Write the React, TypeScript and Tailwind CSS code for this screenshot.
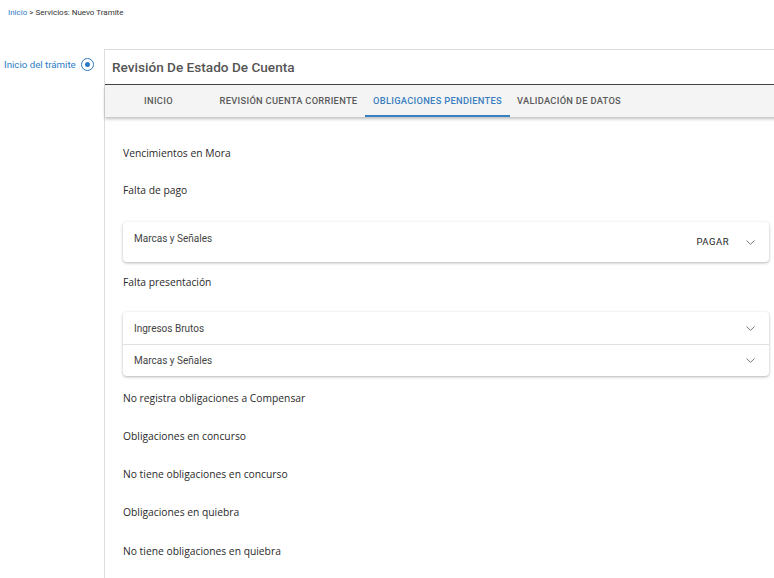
import React from 'react'

const tabs = ['INICIO', 'REVISIÓN CUENTA CORRIENTE', 'OBLIGACIONES PENDIENTES', 'VALIDACIÓN DE DATOS']

function Chevron() {
    return (
        <svg width="9" height="5" viewBox="0 0 9 5" fill="none" className="text-[#777]">
            <path d="M0.8 0.8l3.7 3.5 3.7-3.5" stroke="currentColor" strokeWidth="1" strokeLinecap="round" strokeLinejoin="round" />
        </svg>
    )
}

function Row({ label, divider }: { label: string; divider?: boolean }) {
    return (
        <div className={`flex items-center h-[32px] pl-[11px] pr-[14px] ${divider ? 'border-t border-[#e0e0e0]' : ''}`}>
            <span className="flex-1 text-[10px] text-[#444] font-['Roboto',sans-serif]">{label}</span>
            <Chevron />
        </div>
    )
}

export default function App() {
    const text = "text-[10.3px] leading-[16px] text-[#2a2a2a] font-['Open_Sans',sans-serif]"
    return (
        <div className="w-[774px] h-[578px] overflow-hidden bg-white relative">
            <div className="pl-[8px] pt-[7px] h-[20px] text-[8px] text-[#333] font-['Roboto',sans-serif]">
                <span className="text-[#2c7cc4]">Inicio</span> &gt; Servicios: Nuevo Tramite
            </div>
            <div className="flex mt-[29px]">
                <div className="w-[104px] shrink-0 flex items-start pt-[9px] pl-[4px]">
                    <span className="whitespace-nowrap text-[9.7px] text-[#2c7cc4] font-['Roboto',sans-serif]">Inicio del trámite</span>
                    <span className="ml-[5px] w-[13px] h-[13px] rounded-full border-[1.5px] border-[#2c7cc4] flex items-center justify-center">
                        <span className="w-[5px] h-[5px] rounded-full bg-[#2c7cc4]" />
                    </span>
                </div>
                <div className="w-[683px] shrink-0 border-l border-t border-[#ddd] h-[540px]">
                    <div className="h-[35px] flex items-center pl-[7px] border-b-[1.5px] border-[#444]">
                        <span className="text-[13.6px] font-medium text-[#555] font-['Roboto',sans-serif]">Revisión De Estado De Cuenta</span>
                    </div>
                    <div className="flex h-[32px] bg-[#f4f4f4] shadow-[0_2px_3px_rgba(0,0,0,0.25)] font-['Roboto',sans-serif]">
                        {tabs.map((t, i) => (
                            <div
                                key={t}
                                className={`flex items-center justify-center text-[9.3px] font-medium tracking-[0.3px] ${i === 0 ? 'w-[107px]' : 'px-[7px]'} ${i === 1 ? 'w-[153px]' : ''} ${i === 2 ? 'text-[#3a7fc0] border-b-2 border-[#3a7fc0] w-[145px] pt-[2px]' : 'text-[#5a5a5a]'}`}
                            >
                                {t}
                            </div>
                        ))}
                    </div>
                    <div className="pl-[18px] pr-[18px]">
                        <div className={`${text} mt-[28px]`}>Vencimientos en Mora</div>
                        <div className={`${text} mt-[21px]`}>Falta de pago</div>
                        <div className="mt-[24px] rounded shadow-[0_1px_3px_rgba(0,0,0,0.3)] bg-white">
                            <div className="flex items-center h-[40px] pl-[11px] pr-[14px]">
                                <span className="flex-1 text-[10px] text-[#444] font-['Roboto',sans-serif] -mt-[8px]">Marcas y Señales</span>
                                <span className="text-[9.5px] tracking-[0.5px] text-[#222] mr-[17px] font-['Roboto',sans-serif]">PAGAR</span>
                                <Chevron />
                            </div>
                        </div>
                        <div className={`${text} mt-[12px]`}>Falta presentación</div>
                        <div className="mt-[22px] rounded shadow-[0_1px_3px_rgba(0,0,0,0.3)] bg-white">
                            <Row label="Ingresos Brutos" />
                            <Row label="Marcas y Señales" divider />
                        </div>
                        <div className={`${text} mt-[14px]`}>No registra obligaciones a Compensar</div>
                        <div className={`${text} mt-[22px]`}>Obligaciones en concurso</div>
                        <div className={`${text} mt-[22px]`}>No tiene obligaciones en concurso</div>
                        <div className={`${text} mt-[22px]`}>Obligaciones en quiebra</div>
                        <div className={`${text} mt-[23px]`}>No tiene obligaciones en quiebra</div>
                    </div>
                </div>
            </div>
        </div>
    )
}
